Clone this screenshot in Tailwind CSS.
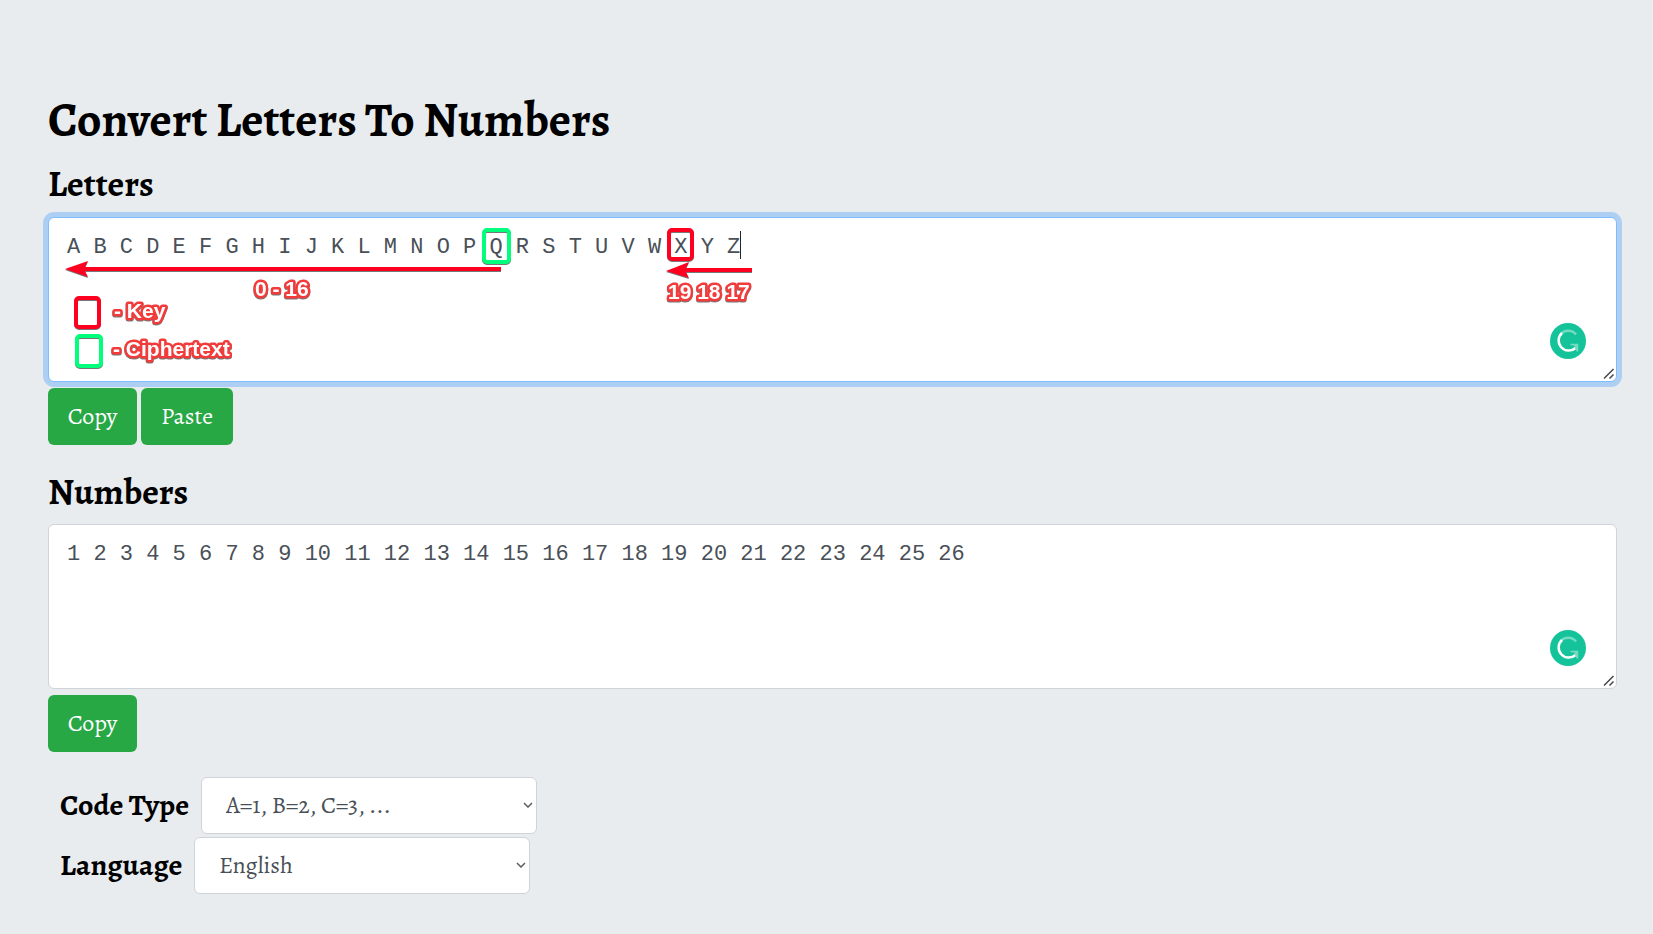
<!DOCTYPE html>
<html lang="en">
<head>
<meta charset="utf-8">
<meta name="viewport" content="width=device-width, initial-scale=1">
<title>Convert Letters To Numbers</title>
<script src="https://cdn.jsdelivr.net/npm/@tailwindcss/browser@4"></script>
</head>
<body class="min-h-screen bg-[#e8ecef] font-['Alegreya','Liberation_Serif',serif] text-black">
<main class="pt-[92px] pr-9 pb-10 pl-12">
  <h1 class="text-[48px] leading-[56px] font-bold">Convert Letters To Numbers</h1>

  <section class="mt-4">
    <h2 class="text-[36px] leading-10 font-bold"><label for="letters">Letters</label></h2>
    <div class="relative mt-[13px]">
      <textarea id="letters" spellcheck="false" class="block h-[165px] w-full resize-none rounded-md border border-[#80bdff] bg-white px-[18px] py-3 font-['Consolas','Liberation_Mono',monospace] text-[22px] leading-9 text-[#495057] ring-5 ring-[#aecff4] outline-none">A B C D E F G H I J K L M N O P Q R S T U V W X Y Z</textarea>
      <!-- Annotations over the letters -->
      <svg class="pointer-events-none absolute top-0 left-0 h-[165px] w-[720px] font-['Liberation_Sans',sans-serif] text-[21px] font-bold" viewBox="0 0 720 165" aria-hidden="true">
        <path d="M692.500 14v28" stroke="#212529"/>
        <g style="filter:drop-shadow(0 1px 0 #777)">
          <g fill="none" stroke-width="4">
            <rect x="436" y="13" width="25" height="32" rx="3" stroke="#00ff7b"/>
            <rect x="621" y="13" width="23" height="29" rx="3" stroke="#ff0020"/>
            <rect x="28" y="81" width="23" height="29" rx="3" stroke="#ff0020"/>
            <rect x="29" y="119" width="24" height="30" rx="3" stroke="#00ff7b"/>
          </g>
          <g fill="#ff0020">
            <path d="M17 52L40 44L37 50H453V54H37L40 60Z"/>
            <path d="M618 54L641 45L638 51H704V55H638L641 61Z"/>
          </g>
          <g fill="#fff" stroke="#f23b3b" stroke-width="5" stroke-linejoin="round" paint-order="stroke">
            <text x="207" y="79">0 - 16</text>
            <text x="620" y="82">19 18 17</text>
            <text x="66" y="101">- Key</text>
            <text x="65" y="139">- Ciphertext</text>
          </g>
        </g>
      </svg>
      <svg class="absolute right-[31px] bottom-[23px] size-9" viewBox="0 0 36 36" fill="none" role="img" aria-label="Grammarly">
        <circle cx="18" cy="18" r="18" fill="#15c39a"/>
        <path d="M10.500 11.500A9.800 9.800 0 0 1 26 11.500" stroke="#73dbc2" stroke-width="2.500"/>
        <path d="M12 10A9.800 9.800 0 1 0 25.500 25" stroke="#fff" stroke-width="2.500"/>
        <path d="M20.500 21.500H27.500V28.500L25 23" fill="#73dbc2" stroke="#73dbc2" stroke-width="1.500"/>
      </svg>
      <svg class="absolute right-[2px] bottom-[2px] size-3" viewBox="0 0 12 12" fill="none" stroke="#45454b" stroke-width="1.500" aria-hidden="true"><path d="M1 10.500L10.500 1M6.500 10.500L10.500 6.500"/></svg>
    </div>
    <div class="mt-1.5 flex gap-1 text-[24px] text-white">
      <button type="button" class="h-[57px] w-[89px] rounded-md bg-[#28a745] pb-0.5">Copy</button>
      <button type="button" class="h-[57px] w-[92px] rounded-md bg-[#28a745] pb-0.5">Paste</button>
    </div>
  </section>

  <section class="mt-[27px]">
    <h2 class="text-[36px] leading-10 font-bold"><label for="numbers">Numbers</label></h2>
    <div class="relative mt-3">
      <textarea id="numbers" spellcheck="false" class="block h-[165px] w-full resize-none rounded-md border border-[#ced4da] bg-white px-[18px] py-3 font-['Consolas','Liberation_Mono',monospace] text-[22px] leading-9 text-[#495057]">1 2 3 4 5 6 7 8 9 10 11 12 13 14 15 16 17 18 19 20 21 22 23 24 25 26</textarea>
      <svg class="absolute right-[31px] bottom-[23px] size-9" viewBox="0 0 36 36" fill="none" role="img" aria-label="Grammarly">
        <circle cx="18" cy="18" r="18" fill="#15c39a"/>
        <path d="M10.500 11.500A9.800 9.800 0 0 1 26 11.500" stroke="#73dbc2" stroke-width="2.500"/>
        <path d="M12 10A9.800 9.800 0 1 0 25.500 25" stroke="#fff" stroke-width="2.500"/>
        <path d="M20.500 21.500H27.500V28.500L25 23" fill="#73dbc2" stroke="#73dbc2" stroke-width="1.500"/>
      </svg>
      <svg class="absolute right-[2px] bottom-[2px] size-3" viewBox="0 0 12 12" fill="none" stroke="#45454b" stroke-width="1.500" aria-hidden="true"><path d="M1 10.500L10.500 1M6.500 10.500L10.500 6.500"/></svg>
    </div>
    <div class="mt-1.5 flex text-[24px] text-white">
      <button type="button" class="h-[57px] w-[89px] rounded-md bg-[#28a745] pb-0.5">Copy</button>
    </div>
  </section>

  <div class="mt-[25px] flex flex-col gap-[3px] pl-3">
    <div class="flex items-center">
      <label for="code" class="w-[141px] text-[30px] font-bold">Code Type</label>
      <div class="relative">
        <select id="code" class="h-[57px] w-[336px] appearance-none rounded-md border border-[#ced4da] bg-white px-6 pb-0.5 text-[24px] text-[#495057]"><option>A=1, B=2, C=3, ...</option></select>
        <svg class="pointer-events-none absolute top-[25px] right-1 h-1.5 w-2.5" viewBox="0 0 10 6" fill="none" stroke="#5c5c5c" stroke-width="1.500" aria-hidden="true"><path d="M1 1l4 4 4-4"/></svg>
      </div>
    </div>
    <div class="flex items-center">
      <label for="language" class="w-[134px] text-[30px] font-bold">Language</label>
      <div class="relative">
        <select id="language" class="h-[57px] w-[336px] appearance-none rounded-md border border-[#ced4da] bg-white px-6 pb-0.5 text-[24px] text-[#495057]"><option>English</option></select>
        <svg class="pointer-events-none absolute top-[25px] right-1 h-1.5 w-2.5" viewBox="0 0 10 6" fill="none" stroke="#5c5c5c" stroke-width="1.500" aria-hidden="true"><path d="M1 1l4 4 4-4"/></svg>
      </div>
    </div>
  </div>
</main>
</body>
</html>
